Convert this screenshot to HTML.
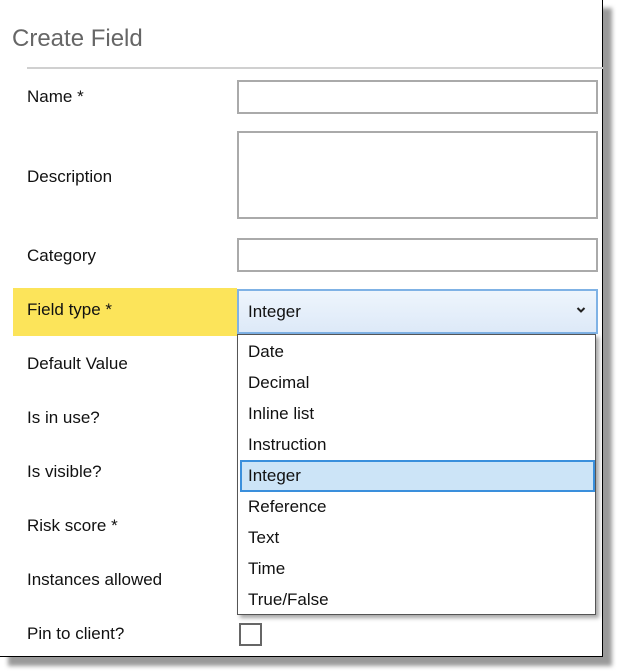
<!DOCTYPE html>
<html><head><style>
body{margin:0;width:619px;height:672px;background:#fff;position:relative;overflow:hidden;font-family:"Liberation Sans",sans-serif;}
.shadow{position:absolute;left:8px;top:8px;width:604px;height:658px;background:#9a9a9a;filter:blur(2px);}
.frame{position:absolute;left:0;top:0;width:602px;height:656px;border:1px solid #000;border-left:none;border-top:none;background:#fff;}
.title{position:absolute;left:12px;top:25px;font-size:24px;color:#666;}
.hr{position:absolute;left:27px;top:67px;width:576px;height:2px;background:#d0d0d0;}
.lbl{position:absolute;left:27px;font-size:17px;color:#111;transform:translateY(-50%);}
.inp{position:absolute;left:237px;width:357px;border:2px solid #aaa;background:#fff;}
.yel{position:absolute;left:13px;top:288px;width:224px;height:48px;background:#fce45a;}
.sel{position:absolute;left:237px;top:289px;width:357px;height:41px;border:2px solid #7fb2e5;background:linear-gradient(#eef5fc,#dde9f8);}
.sel span{position:absolute;left:9px;top:11px;font-size:17px;color:#111;}
.list{position:absolute;left:237px;top:334px;width:357px;height:279px;border:1px solid #555;background:#fff;box-shadow:3px 3px 4px rgba(0,0,0,.35);}
.it{position:absolute;left:10px;font-size:17px;color:#111;transform:translateY(-50%);}
.hl{position:absolute;left:2px;top:125px;width:351px;height:28px;background:#cce4f7;border:2px solid #3a8fdc;}
.cb{position:absolute;left:239px;top:623px;width:19px;height:19px;border:2px solid #666;}
</style></head><body>
<div class="shadow"></div>
<div class="frame"></div>
<div class="title">Create Field</div>
<div class="hr"></div>
<div class="lbl" style="top:97px">Name *</div>
<div class="lbl" style="top:177px">Description</div>
<div class="lbl" style="top:256px">Category</div>
<div class="yel"></div>
<div class="lbl" style="top:310px">Field type *</div>
<div class="lbl" style="top:364px">Default Value</div>
<div class="lbl" style="top:418px">Is in use?</div>
<div class="lbl" style="top:472px">Is visible?</div>
<div class="lbl" style="top:526px">Risk score *</div>
<div class="lbl" style="top:580px">Instances allowed</div>
<div class="lbl" style="top:634px">Pin to client?</div>
<div class="inp" style="top:80px;height:30px"></div>
<div class="inp" style="top:131px;height:84px"></div>
<div class="inp" style="top:238px;height:30px"></div>
<div class="sel"><span>Integer</span>
<svg style="position:absolute;right:10px;top:15px" width="10" height="8" viewBox="0 0 10 8"><path d="M1.5 2 L5 5.5 L8.5 2" fill="none" stroke="#222" stroke-width="2"/></svg></div>
<div class="list">
<div class="hl"></div>
<div class="it" style="top:17px">Date</div>
<div class="it" style="top:48px">Decimal</div>
<div class="it" style="top:79px">Inline list</div>
<div class="it" style="top:110px">Instruction</div>
<div class="it" style="top:141px">Integer</div>
<div class="it" style="top:172px">Reference</div>
<div class="it" style="top:203px">Text</div>
<div class="it" style="top:234px">Time</div>
<div class="it" style="top:265px">True/False</div>
</div>
<div class="cb"></div>
</body></html>
